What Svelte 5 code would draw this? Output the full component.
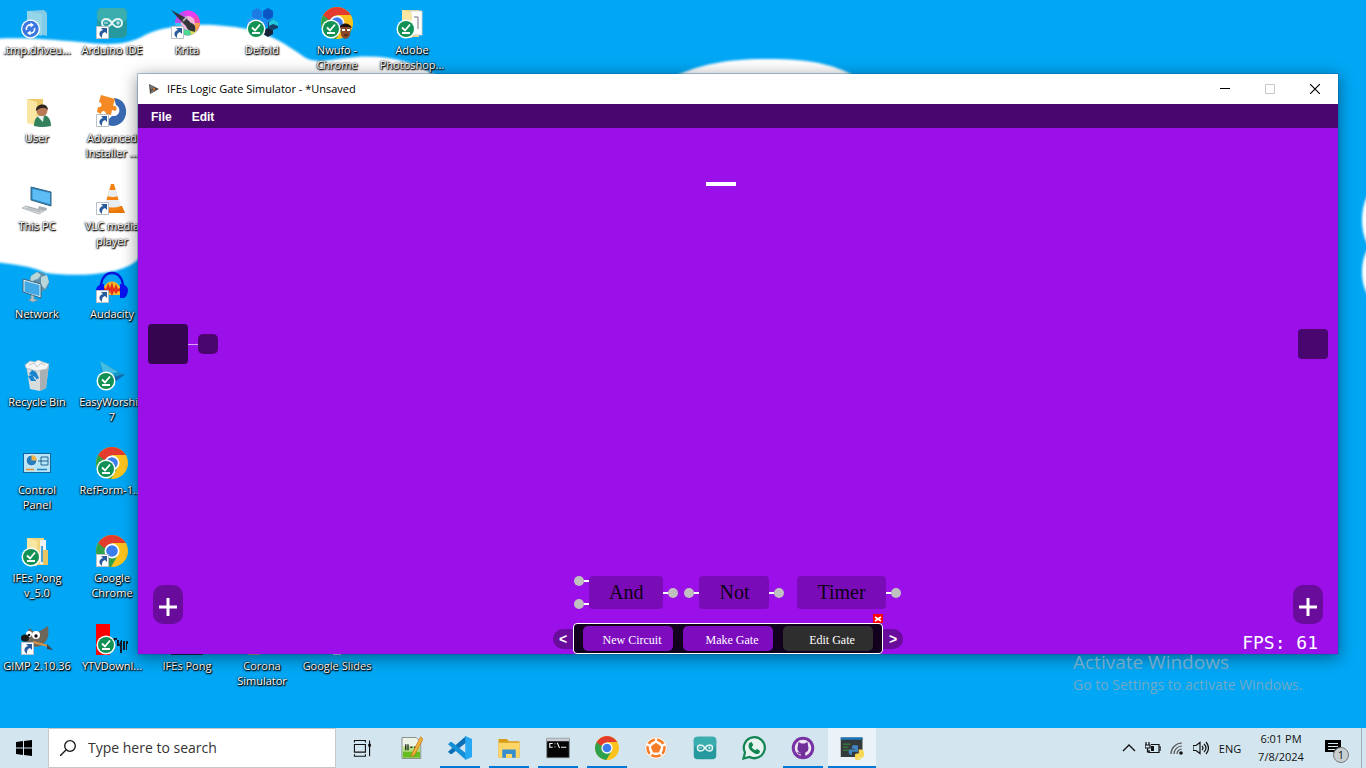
<script>
  const rows = [
    [
      { label: '.tmp.driveu...', icon: 'tmp' },
      { label: 'Arduino IDE', icon: 'arduino', badge: 'link' },
      { label: 'Krita', icon: 'krita', badge: 'link' },
      { label: 'Defold', icon: 'defold', badge: 'check' },
      { label: 'Nwufo -\nChrome', icon: 'chromeface', badge: 'check' },
      { label: 'Adobe\nPhotoshop...', icon: 'folderpaper', badge: 'check' }
    ],
    [
      { label: 'User', icon: 'user' },
      { label: 'Advanced\nInstaller ...', icon: 'installer', badge: 'link' }
    ],
    [
      { label: 'This PC', icon: 'pc' },
      { label: 'VLC media\nplayer', icon: 'vlc', badge: 'link' }
    ],
    [
      { label: 'Network', icon: 'network' },
      { label: 'Audacity', icon: 'audacity', badge: 'link' }
    ],
    [
      { label: 'Recycle Bin', icon: 'bin' },
      { label: 'EasyWorship\n7', icon: 'easy', badge: 'check' }
    ],
    [
      { label: 'Control\nPanel', icon: 'control' },
      { label: 'RefForm-1....', icon: 'chrome', badge: 'check' }
    ],
    [
      { label: 'IFEs Pong\nv_5.0', icon: 'folderfull', badge: 'check' },
      { label: 'Google\nChrome', icon: 'chrome', badge: 'link' }
    ],
    [
      { label: 'GIMP 2.10.36', icon: 'gimp', badge: 'link' },
      { label: 'YTVDownl...', icon: 'ytv', badge: 'check' },
      { label: 'IFEs Pong', icon: 'pong' },
      { label: 'Corona\nSimulator', icon: 'corona' },
      { label: 'Google Slides', icon: 'slides' }
    ]
  ];

  const apps = [
    { icon: 'taskview', name: 'Task View' },
    { icon: 'notepad', name: 'Notepad++' },
    { icon: 'vscode', name: 'Visual Studio Code', open: true },
    { icon: 'explorer', name: 'File Explorer', open: true },
    { icon: 'terminal', name: 'Command Prompt', open: true },
    { icon: 'chrome', name: 'Google Chrome', open: true },
    { icon: 'ball', name: 'Match tracker' },
    { icon: 'arduino', name: 'Arduino IDE' },
    { icon: 'whatsapp', name: 'WhatsApp' },
    { icon: 'github', name: 'GitHub Desktop', open: true },
    { icon: 'python', name: 'Python', open: true, active: true }
  ];

  const gates = [
    { name: 'And', inputs: 2 },
    { name: 'Not', inputs: 1 },
    { name: 'Timer', inputs: 0 }
  ];
</script>

{#snippet icon(name)}
  <svg class="icon" viewBox="0 0 32 32" aria-hidden="true">
    {#if name === 'tmp'}
      <path d="M6 4l17-1 3 3v23l-8-2H6z" fill="#83cbe6" />
      <path d="M6 4l15 3v22L6 26z" fill="#9ad7e8" opacity=".8" />
      <circle cx="9.500" cy="22" r="9.500" fill="#fff" />
      <circle cx="9.500" cy="22" r="8.200" fill="#3976df" />
      <path d="M5.500 23a4 4 0 0 1 5-5M13.500 21a4 4 0 0 1-5 5" fill="none" stroke="#fff" stroke-width="1.700" />
      <path d="M9.500 15.500l3.500 2.500-3.500 2.500zM9.500 23.500L6 26l3.500 2.500z" fill="#fff" />
    {:else if name === 'arduino'}
      <rect x="1" y="1" width="30" height="30" rx="5" fill="#25999d" />
      <rect x="1" y="1" width="30" height="14" rx="5" fill="#3aadaf" />
      <path d="M16 16c-2-3-4-4-6-4a4 4 0 0 0 0 8c2 0 4-1 6-4s4-4 6-4a4 4 0 0 1 0 8c-2 0-4-1-6-4z" fill="none" stroke="#e3f5f4" stroke-width="2" />
      <path d="M8 16h4M20 16h4M22 14v4" stroke="#e3f5f4" stroke-width="1" />
    {:else if name === 'krita'}
      <circle cx="16.500" cy="16" r="12.500" fill="#b84df0" />
      <path d="M17 16L13 4a12.500 12.500 0 0 1 13 4z" fill="#e93df0" />
      <path d="M17 16l9-8a12.500 12.500 0 0 1 3 8z" fill="#f04bb4" />
      <path d="M17 16h12a12.500 12.500 0 0 1-3 8z" fill="#f3a64e" />
      <path d="M17 16l9 8a12.500 12.500 0 0 1-6 4z" fill="#d9e452" />
      <path d="M17 16l3 12a12.500 12.500 0 0 1-9-1z" fill="#4bd990" />
      <path d="M17 16l-6 11a12.500 12.500 0 0 1-7-11z" fill="#3dc4ef" />
      <circle cx="17" cy="16" r="7" fill="#f4b5dc" />
      <path d="M0 3l15 8 5 5c4 1 5 4 4 9-4-1-8-2-9-6l-5-5z" fill="#333439" />
      <path d="M12 14l4-4" stroke="#a9acb3" stroke-width="2" />
    {:else if name === 'defold'}
      <path d="M11 1l5 3v6l-5 3-5-3V4z" fill="#1d7be4" />
      <path d="M22 1l5 3v6l-5 3-5-3V4z" fill="#0b55c4" />
      <path d="M16 10l6 3v6l-6 3-5-3v-6z" fill="#1a8cf0" />
      <path d="M6 10l5 3v6l-5 3-5-3v-6z" fill="#2c9af5" />
      <path d="M27 12l5 3v6l-5 2-5-2v-6z" fill="#16436b" />
      <path d="M27 12l5 3v4l-5-2-4 2v-4z" fill="#22c7e2" />
      <path d="M22 21l5 2v4l-5 3-5-3v-4z" fill="#152238" />
    {:else if name === 'chrome' || name === 'chromeface'}
      <circle cx="16" cy="16" r="16" fill="#fcc31e" />
      <path d="M2.200 8A16 16 0 0 0 15 32l7-12-13-1z" fill="#2da14c" />
      <path d="M2.200 8l7 12 7-12z" fill="#2da14c" />
      <path d="M2.200 8A16 16 0 0 1 29.800 8H16l-8 5z" fill="#e33b2e" />
      <circle cx="16" cy="16" r="7.500" fill="#fff" />
      <circle cx="16" cy="16" r="5.800" fill="#3b7ded" />
      {#if name === 'chromeface'}
        <path d="M19 19c3-3 10-2 11 1l-1 8c-2 5-7 5-9 0z" fill="#8a4a29" />
        <path d="M19 21c0-6 10-6 12 0l-2-1h-8z" fill="#1c1310" />
        <path d="M21 23h3M26 23h3" stroke="#fff" stroke-width="2" />
        <path d="M23 28h4" stroke="#2c1410" stroke-width="1" />
      {/if}
    {:else if name === 'folderpaper' || name === 'folderfull'}
      <path d="M6 3h17v27H6z" fill="#f1d57f" />
      {#if name === 'folderpaper'}
        <path d="M14 4h12v24H14z" fill="#fff" stroke="#ccd0d4" />
        <path d="M18 10h4v12" fill="none" stroke="#6f7378" />
      {:else}
        <path d="M19 5h6v24h-6z" fill="#eef3f6" />
        <path d="M21 11v16" stroke="#4da1d0" stroke-width="2" />
        <path d="M22 15h5v15h-5z" fill="#e8c562" />
      {/if}
      <path d="M6 3l10 3v25L6 29z" fill="#fae6a3" />
    {:else if name === 'user'}
      <path d="M6 4h16v24H6z" fill="#ecc866" />
      <path d="M6 4l10 3v24L6 28z" fill="#fae6a3" />
      <path d="M13 31c0-7 3-11 8-11s9 3 9 11q-9 2-17 0z" fill="#33805c" />
      <path d="M16 21l6 6 1-7z" fill="#e9efec" />
      <circle cx="21" cy="15.500" r="5.500" fill="#b97b56" />
      <path d="M15 16c-1-8 12-9 12-1-3-3-7-3-12 1z" fill="#2b2422" />
    {:else if name === 'installer'}
      <path d="M18 3c17 1 16 28-2 28l-8-2 8-8c9 1 9-9 4-11z" fill="#3969b1" />
      <path d="M5 0l14 4-2 7c4-1 5 4 2 5l-3-1-1 5-5-1c0-4-5-4-5 0l-4-2 1-5c4 1 5-4 1-5z" fill="#f58a24" />
    {:else if name === 'pc'}
      <path d="M10 4l20 5v14L10 17z" fill="#2687c4" stroke="#386580" />
      <path d="M11.500 6L29 10v11l-17.500-5z" fill="#5ebdf5" />
      <path d="M18 23l8 2-1 3-8-2z" fill="#a9afb4" />
      <path d="M5 23l18 5-5 3-17-6z" fill="#d8dcdf" stroke="#9fa4a8" stroke-width=".7" />
      <path d="M5 25l14 4M7 24l13 4" stroke="#929a9f" stroke-width=".6" />
    {:else if name === 'vlc'}
      <path d="M6 23h20l3 7H3z" fill="#e87709" />
      <path d="M15 1h3l7 25q-9 4-17 0z" fill="#f58110" />
      <path d="M13 7h7l2 6q-5 2-11 0zM10 17h13l2 6q-8 3-17 0z" fill="#e9edef" />
    {:else if name === 'network'}
      <circle cx="18" cy="11" r="10" fill="#5c8fa9" />
      <path d="M10 5l6-4 4 3-3 4-4 1-2 4-2-2zM20 6l6-2 2 7-4 7-4-4z" fill="#b9d6d9" />
      <path d="M2 8l18 5v14L2 21z" fill="#e3edf1" stroke="#386580" />
      <path d="M3.500 10l15 4v11l-15-4z" fill="#42a9e7" />
      <path d="M10 24l3 1v3l4 1-5 2-5-2 3-1z" fill="#b6c0c4" stroke="#73858d" stroke-width=".5" />
    {:else if name === 'audacity'}
      <path d="M7 24C5 6 27 6 25 24z" fill="#f4b928" />
      <path d="M6 19l2-3 2 2 2-6 2 5 2-6 2 7 2-5 2 5 3-2 2 3-2 2-3-1-2 3-2-3-2 5-2-5-2 6-2-6-3 3z" fill="#e72d21" />
      <path d="M5 17C4-3 28-3 27 17" fill="none" stroke="#0714dc" stroke-width="2.500" />
      <path d="M0 18q2-5 8-5v14H4q-4-2-4-9M32 18q-2-5-8-5v14h4q4-2 4-9" fill="#0714ee" />
    {:else if name === 'bin'}
      <path d="M5 5h23l-3 24-6 3-10-2z" fill="#d7dcdd" />
      <path d="M19 7l9-2-3 24-6 3z" fill="#a8b0b3" />
      <path d="M4 6l5-4 5 1 3-2 5 2 6 2-2 5-10 2-11-3z" fill="#f4f5f4" stroke="#aeb5b7" stroke-width=".7" />
      <path d="M8 6l5-2 3 4 4-4 4 2" fill="none" stroke="#c0c8ca" />
      <path d="M8 15l3-4 4 2-2 4zM15 13l3 6-4 2-2-4zM7 17l3 5h5v-3l-4-3z" fill="#1684d0" />
    {:else if name === 'easy'}
      <path d="M4 2l25 14L8 29z" fill="#1596c8" />
      <path d="M4 2l18 11-14 4z" fill="#44bde0" />
      <path d="M17 18l12-3-10 8z" fill="#1067b1" />
    {:else if name === 'control'}
      <rect x="2.500" y="6.500" width="27" height="19" fill="#b9e5f8" stroke="#17659a" />
      <circle cx="10.500" cy="13.500" r="5.500" fill="#2780bd" stroke="#fff" />
      <path d="M10.500 13.500V8a5.500 5.500 0 0 1 5.500 5.500z" fill="#f3b348" />
      <path d="M20 10h7v8h-7zM20 14h7M17 14h3" fill="none" stroke="#24668f" />
      <path d="M5 22.500h8" stroke="#ee8d24" stroke-width="1.500" />
      <path d="M16 22.500h10" stroke="#2385bd" stroke-width="1.500" />
    {:else if name === 'gimp'}
      <path d="M3 14c5-2 3-7 6-9 2 4 7 5 10 3l8-5c1 8 1 14-6 19-6 4-16 1-18-8z" fill="#6d675b" />
      <circle cx="8" cy="11" r="3" fill="#fff" />
      <circle cx="15" cy="12" r="4" fill="#fff" />
      <circle cx="8" cy="12" r="1.300" fill="#111" />
      <circle cx="15" cy="13" r="1.700" fill="#111" />
      <ellipse cx="4" cy="15" rx="4" ry="3.500" fill="#191919" />
      <path d="M12 19l15 4" stroke="#dd9142" stroke-width="2" />
      <path d="M26 21l6 6-6-1z" fill="#454545" />
    {:else if name === 'ytv'}
      <path d="M0 1h14v31H0z" fill="#f00" />
      <path d="M15 15h6v2h-2v10h-2V17h-2zM21 17h2v5l2-5h1v13h-2v-7h-3zM27 18h2v9h-2zM30 18h2v3h-1v6h-1z" fill="#101c2b" />
    {:else if name === 'pong'}
      <path d="M0 4h32v28H0z" fill="#111" />
    {:else if name === 'corona'}
      <path d="M2 16h12v16H2z" fill="#d7a084" />
    {:else if name === 'slides'}
      <path d="M8 0h18v31H8z" fill="#f3bd28" />
      <path d="M12 30h8v2h-8z" fill="#eee" />
    {:else if name === 'taskview'}
      <path d="M5 8V5h16v3M5 25v3h16v-3M5 11h16v11H5zM27 5v23" fill="none" stroke="#111" stroke-width="1.600" />
      <path d="M25 10h4v4h-4z" fill="#111" />
    {:else if name === 'notepad'}
      <path d="M4 2h19l6 6v22H4z" fill="#edf3e7" stroke="#71766d" />
      <path d="M5 19h23v10H5z" fill="#65bd22" />
      <path d="M5 14h23v7H5z" fill="#b2de82" />
      <path d="M9 11v8M12 11v8M15 15h3M20 15h3" stroke="#323c28" stroke-width="2" />
      <path d="M29 1l3 3-11 21-5 3 2-6z" fill="#efb33b" stroke="#c57718" />
    {:else if name === 'vscode'}
      <path d="M24 0v9L5 24H3l-3-3z" fill="#0c6fb5" />
      <path d="M0 11l3-3h2l19 15v9z" fill="#168fd9" />
      <path d="M23 0l9 4v24l-9 4z" fill="#26a8f2" />
    {:else if name === 'explorer'}
      <path d="M2 4h11l3 3h14v22H2z" fill="#d89c19" />
      <path d="M2 9h28v20H2z" fill="#ffd667" />
      <path d="M7 18h18v11h-5v-5h-8v5H7z" fill="#398fcd" />
    {:else if name === 'terminal'}
      <path d="M1 3h30v26H1z" fill="#050505" stroke="#7b8085" />
      <path d="M1 3h30v4H1z" fill="#c8ccd0" />
      <path d="M9 10H5v5h4M12 10v1M12 14v1M15 9l3 7M20 15h7" fill="none" stroke="#f3f3f3" stroke-width="1.500" />
    {:else if name === 'ball'}
      <circle cx="16" cy="16" r="15" fill="#fff" stroke="#cfd0d0" />
      <circle cx="16" cy="16" r="13" fill="#f67c26" />
      <path d="M16 8V3M9 14l-5-3M23 14l5-3M11 21l-3 5M21 21l3 5" fill="none" stroke="#fff" stroke-width="3" />
      <circle cx="16" cy="16" r="9.500" fill="#fff" />
      <path d="M16 9l7 5-3 8h-8l-3-8z" fill="#f67c26" />
    {:else if name === 'whatsapp'}
      <path d="M2 30l2-8A14 14 0 1 1 10 28z" fill="#e7f3ee" stroke="#128552" stroke-width="3" />
      <path d="M10 9l3-1 2 4-2 3c2 3 4 4 5 4l2-2 4 3c0 5-5 5-9 2-5-3-8-8-5-13z" fill="#128552" />
    {:else if name === 'github'}
      <circle cx="16" cy="16" r="15" fill="#7832a3" />
      <circle cx="16" cy="16" r="11" fill="#f0e7f5" />
      <path d="M10 8l4 2h4l4-2 1 6c1 5-1 7-4 8v6h-6v-4c-3 1-4-1-5-3 2 0 3 2 5 1-4-1-5-4-4-8z" fill="#713099" />
    {:else if name === 'python'}
      <path d="M1 2h29v26H1z" fill="#343a3b" />
      <path d="M1 2h29v3H1z" fill="#1978bf" />
      <path d="M4 11h10M4 15h7M4 19h10" stroke="#37743c" stroke-width="2" />
      <path d="M16 13q4-2 8 0v8h-8v4h-3q-3-4 0-7h7v-1h-4z" fill="#3f86c1" />
      <path d="M25 18h4q3 1 3 6t-3 5h-5v1h4v1q-4 2-8 0v-6q0-2 5-2z" fill="#f7d850" />
    {/if}
  </svg>
{/snippet}

<div class="page">
  <main class="desktop">
    <svg class="sky" viewBox="0 0 1366 728" preserveAspectRatio="none" aria-hidden="true">
      <defs><filter id="soft"><feGaussianBlur stdDeviation="1.200" /></filter></defs>
      <g fill="#fff" filter="url(#soft)">
        <path d="M-10 39C30 37 50 40 80 42C112 46 130 44 145 35C165 25 200 23 225 26C265 29 282 42 300 54C312 64 323 61 345 58C380 53 415 60 440 78L260 240C190 220 160 240 135 262C115 277 70 276 46 273C28 265 20 266-10 261Z" />
        <path d="M675 76C695 67 718 60 757 59C805 58 831 63 855 76Z" />
        <ellipse cx="1378" cy="220" rx="16" ry="32" />
        <ellipse cx="1378" cy="272" rx="16" ry="30" />
      </g>
    </svg>

    <div class="shortcuts">
      {#each rows as row}
        <div class="row">
          {#each row as item}
            <a class="shortcut" href="#desktop">
              <span class="art">
                {@render icon(item.icon)}
                {#if item.badge === 'link'}
                  <svg class="badge link" viewBox="0 0 13 13" aria-hidden="true">
                    <path d="M.5.5h12v12H.5z" fill="#fff" stroke="#b9c1c8" />
                    <path d="M5 2h6v6L9 6c-3 1-3 3-3 6-4-3-3-7 1-8z" fill="#285a9c" />
                  </svg>
                {:else if item.badge === 'check'}
                  <svg class="badge check" viewBox="0 0 20 20" aria-hidden="true">
                    <circle cx="10" cy="10" r="9.500" fill="#fff" />
                    <circle cx="10" cy="10" r="8" fill="#119153" />
                    <path d="M6 8.500l3 3 5-6M6 14h8" fill="none" stroke="#fff" stroke-width="1.800" />
                  </svg>
                {/if}
              </span>
              <span class="label">{item.label}</span>
            </a>
          {/each}
        </div>
      {/each}
    </div>

    <section class="window" aria-label="IFEs Logic Gate Simulator">
      <header class="titlebar">
        <svg class="appicon" viewBox="0 0 12 12" aria-hidden="true">
          <path d="M1 1l10 5L2 11z" fill="#4a4541" />
          <path d="M1 1l6 3-4 3zM2 11l2-4 4 .5z" fill="#77736e" />
          <path d="M5 5h2v2H5z" fill="#d0762d" />
        </svg>
        <h1>IFEs Logic Gate Simulator - *Unsaved</h1>
        <div class="controls">
          <button aria-label="Minimize"><svg viewBox="0 0 10 10"><path d="M0 4.500h10" stroke="#000" /></svg></button>
          <button aria-label="Maximize" disabled><svg viewBox="0 0 10 10"><path d="M.5.5h9v9h-9z" fill="none" stroke="#c8c8c8" /></svg></button>
          <button aria-label="Close"><svg viewBox="0 0 10 10"><path d="M0 0l10 10M10 0L0 10" stroke="#000" stroke-width="1.200" /></svg></button>
        </div>
      </header>
      <nav class="menubar">
        <button>File</button>
        <button>Edit</button>
      </nav>
      <div class="canvas">
        <div class="dash"></div>
        <div class="source"><span class="body"></span><span class="wire"></span><span class="pin"></span></div>
        <div class="sink"></div>
        <button class="add left" aria-label="Add input"><svg viewBox="0 0 18 18"><path d="M9 0v18M0 9h18" stroke="#fff" stroke-width="3" /></svg></button>
        <button class="add right" aria-label="Add output"><svg viewBox="0 0 18 18"><path d="M9 0v18M0 9h18" stroke="#fff" stroke-width="3" /></svg></button>
        <div class="fps">FPS: 61</div>

        <div class="dock">
          <div class="gates">
            {#each gates as gate}
              <div class="gate">
                {#if gate.inputs}
                  <span class="ports">
                    {#each Array(gate.inputs) as _}
                      <span class="port in"></span>
                    {/each}
                  </span>
                {/if}
                <button class="gatebody">{gate.name}</button>
                <span class="port out"></span>
              </div>
            {/each}
          </div>
          <div class="strip">
            <button class="arrow prev" aria-label="Previous">&lt;</button>
            <div class="tools">
              <button>New Circuit</button>
              <button>Make Gate</button>
              <button class="dark">Edit Gate</button>
              <button class="dismiss" aria-label="Close toolbar"><svg viewBox="0 0 10 9"><path d="M2 3l6 4M8 3L2 7" stroke="#fff" stroke-width="1.600" /></svg></button>
            </div>
            <button class="arrow next" aria-label="Next">&gt;</button>
          </div>
        </div>
      </div>
    </section>

    <aside class="activate">
      <p class="big">Activate Windows</p>
      <p>Go to Settings to activate Windows.</p>
    </aside>
  </main>

  <footer class="taskbar">
    <button class="start" aria-label="Start">
      <svg viewBox="0 0 16 16"><path d="M0 2l7-1v6.500H0zM8 1l8-1v7.500H8zM0 8.500h7V15l-7-1zM8 8.500h8V16l-8-1z" fill="#000" /></svg>
    </button>
    <label class="search">
      <svg viewBox="0 0 16 16" aria-hidden="true"><circle cx="10" cy="6" r="5.300" fill="none" stroke="#111" stroke-width="1.300" /><path d="M6 10l-6 6" stroke="#111" stroke-width="1.300" /></svg>
      <input type="text" placeholder="Type here to search" aria-label="Search" />
    </label>
    <div class="apps">
      {#each apps as app}
        <button class="app {app.icon}" class:open={app.open} class:active={app.active} aria-label={app.name}>{@render icon(app.icon)}</button>
      {/each}
    </div>
    <div class="tray">
      <button aria-label="Show hidden icons"><svg viewBox="0 0 16 16"><path d="M2 11l6-6 6 6" fill="none" stroke="#111" stroke-width="1.400" /></svg></button>
      <button aria-label="Battery"><svg viewBox="0 0 16 16"><path d="M6 4.500h8v8H4V10M14 7h2v3h-2M1 2v3M4 2v3M0 5h5v3H0zM2.500 8v4H5" fill="none" stroke="#111" stroke-width="1.200" /><path d="M6 6h3v5H6z" fill="#111" /></svg></button>
      <button aria-label="Wi-Fi"><svg viewBox="0 0 16 16"><path d="M2 14A11 11 0 0 1 13 3M5 14a8 8 0 0 1 8-8M8 14a5 5 0 0 1 5-5" fill="none" stroke="#555" stroke-width="1.200" /><circle cx="12" cy="13" r="1.800" fill="#111" /></svg></button>
      <button aria-label="Volume"><svg viewBox="0 0 16 16"><path d="M0 5.500h3l4-3v11l-4-3H0zM9 6q2 2 0 4M11 4q4 4 0 8M13 2q5 6 0 12" fill="none" stroke="#111" stroke-width="1.200" /></svg></button>
      <button class="lang">ENG</button>
      <button class="clock"><span>6:01 PM</span><span>7/8/2024</span></button>
      <button class="notify" aria-label="Notifications">
        <svg viewBox="0 0 16 16"><path d="M0 0h16v12h-4v4l-4-4H0z" fill="#000" /><path d="M3 3.500h10M3 6.500h10M3 9.500h7" stroke="#d8e8ef" /></svg>
        <span class="count">1</span>
      </button>
    </div>
  </footer>
</div>

<style>
  :global(body) { margin: 0; background: #01a7f5; }
  .page {
    min-height: 100vh;
    display: flex;
    flex-direction: column;
    font-family: "Open Sans", "Noto Sans", sans-serif;
    font-size: 11px;
    overflow: hidden;
  }
  button { border: 0; padding: 0; margin: 0; background: none; font: inherit; color: inherit; }
  svg { display: block; }
  .desktop { position: relative; flex: 1; background: #01a7f5; overflow: hidden; }
  .sky { position: absolute; inset: 0; width: 100%; height: 100%; }

  .shortcuts { position: relative; }
  .row { display: flex; height: 88px; }
  .shortcut {
    box-sizing: border-box;
    width: 75px;
    padding: 7px 1px 0 0;
    display: flex;
    flex-direction: column;
    align-items: center;
    gap: 3px;
    color: #fff;
    text-decoration: none;
  }
  .art { position: relative; width: 32px; height: 32px; }
  .icon { width: 32px; height: 32px; }
  .badge { position: absolute; left: 0; bottom: 0; }
  .link { width: 13px; height: 13px; }
  .check { width: 20px; height: 20px; }
  .label {
    line-height: 15px;
    text-align: center;
    white-space: pre;
    text-shadow: 1px 1px 1px #000, 0 1px 2px #000, 0 0 2px #000;
  }

  .window {
    position: absolute;
    inset: 74px 28px 74px 138px;
    display: flex;
    flex-direction: column;
    background: #9b0fe9;
    box-shadow: 0 0 0 1px rgba(0, 80, 150, .3), 0 3px 15px 1px rgba(0, 0, 0, .42);
  }
  .titlebar { height: 30px; display: flex; align-items: center; background: #fff; padding: 0 1px 0 10px; }
  .appicon { width: 12px; height: 12px; }
  h1 { margin: 0 auto 0 7px; font-size: 11px; font-weight: 400; line-height: 16px; color: #000; }
  .controls { display: flex; height: 100%; }
  .controls button { width: 45px; display: grid; place-items: center; }
  .controls svg { width: 10px; height: 10px; }
  .menubar {
    height: 24px;
    display: flex;
    align-items: center;
    gap: 20px;
    padding: 0 13px;
    background: #4a066f;
    color: #fff;
    font: bold 12px/16px "Liberation Sans", Arial, sans-serif;
  }
  .menubar button { padding-top: 2px; }
  .canvas { position: relative; flex: 1; display: flex; flex-direction: column; justify-content: flex-end; align-items: center; }
  .dash { position: absolute; top: 54px; left: 568px; width: 30px; height: 4px; background: #fff; }
  .source { position: absolute; top: 196px; left: 10px; display: flex; align-items: center; }
  .body { width: 40px; height: 40px; border-radius: 4px; background: #36054f; }
  .wire { width: 10px; height: 1px; background: #d6a8ee; }
  .pin { width: 20px; height: 20px; border-radius: 5px; background: #4a066f; }
  .sink { position: absolute; top: 201px; right: 10px; width: 30px; height: 30px; border-radius: 4px; background: #4a066f; }
  .add {
    position: absolute;
    bottom: 30px;
    width: 30px;
    height: 39px;
    border-radius: 10px;
    background: #690b9b;
    display: grid;
    place-items: center;
    padding-top: 5px;
  }
  .add svg { width: 18px; height: 18px; }
  .left { left: 15px; }
  .right { right: 15px; }
  .fps { position: absolute; right: 20px; bottom: 0; color: #fff; font: 18px/22px "DejaVu Sans Mono", monospace; }

  .dock { display: flex; flex-direction: column; gap: 14px; width: 350px; margin-right: 20px; }
  .gates { display: flex; gap: 6px; margin-left: 21px; }
  .gate { display: flex; align-items: center; }
  .gate:last-child { margin-left: 7px; }
  .gatebody {
    height: 33px;
    padding: 0 20px;
    border-radius: 4px;
    background: #7a0cb8;
    color: #0c0014;
    font: 20px/33px "Liberation Serif", "Times New Roman", serif;
  }
  .ports { display: flex; flex-direction: column; gap: 13px; }
  .port { display: flex; align-items: center; width: 15px; height: 10px; }
  .port::before { content: ""; width: 10px; height: 10px; border-radius: 50%; background: #c0c0c0; }
  .port::after { content: ""; width: 5px; height: 2px; background: #fff; }
  .out { flex-direction: row-reverse; }
  .strip { display: flex; align-items: center; color: #fff; }
  .arrow { width: 20px; height: 20px; background: #690b9b; font: bold 14px/20px "Liberation Sans", Arial, sans-serif; }
  .prev { border-radius: 10px 0 0 10px; }
  .next { border-radius: 0 10px 10px 0; }
  .tools {
    position: relative;
    flex: 1;
    display: flex;
    justify-content: center;
    gap: 10px;
    padding: 2px 0;
    border: 1px solid #fff;
    border-radius: 4px;
    background: #13001f;
  }
  .tools button {
    width: 90px;
    height: 25px;
    padding: 2px 0 0 8px;
    border-radius: 5px;
    background: #7d0cbf;
    font: 12px/20px "Liberation Serif", "Times New Roman", serif;
  }
  .tools .dark { background: #2e2e2e; }
  .tools .dismiss { position: absolute; right: -1px; top: -10px; width: 10px; height: 9px; padding: 0; border-radius: 0; background: #f00; }

  .activate { position: absolute; right: 57px; bottom: 33px; width: 236px; color: #72a9c6; }
  .activate p { margin: 0; white-space: nowrap; font-size: 14px; line-height: 20px; }
  .activate .big { font-size: 19px; line-height: 25px; }

  .taskbar { height: 40px; display: flex; background: #d3e6ef; color: #111; }
  .start { width: 48px; display: grid; place-items: center; }
  .start svg, .search svg { width: 16px; height: 16px; }
  .search {
    box-sizing: border-box;
    width: 288px;
    display: flex;
    align-items: center;
    gap: 12px;
    padding: 0 11px;
    background: #fff;
    border: 1px solid #c6c9cb;
  }
  input { flex: 1; min-width: 0; border: 0; padding: 0; outline: 0; background: none; font: 14px/20px "Open Sans", "Noto Sans", sans-serif; color: #222; }
  input::placeholder { color: #333; opacity: 1; }
  .apps { display: flex; gap: 1px; padding-left: 2px; }
  .app { width: 48px; height: 40px; display: grid; place-items: center; }
  .app .icon { width: 24px; height: 24px; }
  .app.taskview .icon { width: 22px; height: 22px; }
  .open { background: linear-gradient(#0078d7, #0078d7) center bottom / 40px 2px no-repeat; }
  .active { background: linear-gradient(#0078d7, #0078d7) center bottom / 48px 2px no-repeat #ebf3f8; }
  .tray { margin-left: auto; display: flex; align-items: center; border-right: 1px solid #9fb0b9; margin-right: 4px; padding-right: 14px; }
  .tray button { width: 24px; height: 40px; display: grid; place-items: center; }
  .tray svg { width: 16px; height: 16px; }
  .tray .lang { width: 34px; }
  .tray .clock { width: 68px; align-content: center; line-height: 18px; }
  .tray .notify { position: relative; width: 28px; margin-left: 4px; }
  .count {
    position: absolute;
    left: 14px;
    top: 19px;
    width: 14px;
    height: 14px;
    border: 1px solid #777;
    border-radius: 50%;
    background: #c8cfd3;
    line-height: 14px;
    text-align: center;
  }
</style>
